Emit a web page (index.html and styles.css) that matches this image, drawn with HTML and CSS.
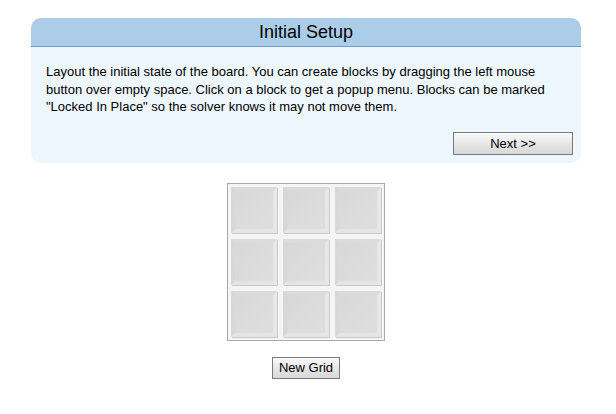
FILE: index.html
```html
<!DOCTYPE html>
<html>
<head>
<meta charset="utf-8">
<link rel="stylesheet" href="styles.css">
</head>
<body>
<div class="wrap">
  <div class="panel">
    <div class="panel-head">Initial Setup</div>
    <div class="panel-body">
      <p class="intro">Layout the initial state of the board. You can create blocks by dragging the left mouse button over empty space. Click on a block to get a popup menu. Blocks can be marked "Locked In Place" so the solver knows it may not move them.</p>
      <div class="actions"><button class="btn btn-next">Next &gt;&gt;</button></div>
    </div>
  </div>
  <div class="board-area">
    <div class="board">
      <div class="cell"></div><div class="cell"></div><div class="cell"></div>
      <div class="cell"></div><div class="cell"></div><div class="cell"></div>
      <div class="cell"></div><div class="cell"></div><div class="cell"></div>
    </div>
    <button class="btn btn-grid">New Grid</button>
  </div>
</div>
</body>
</html>
```
FILE: styles.css
```css
html, body {
  margin: 0;
  padding: 0;
  background: #fff;
}
body {
  font-family: "Liberation Sans", Arial, sans-serif;
  color: #000;
}
.wrap {
  width: 550px;
  margin: 18px 0 0 31px;
}
.panel {
  background: #eff7fe;
  border-radius: 10px;
  overflow: hidden;
}
.panel-head {
  background: #abcde7;
  border-bottom: 1px solid #6d9ec8;
  height: 28px;
  line-height: 29px;
  text-align: center;
  font-size: 18px;
}
.panel-body {
  padding: 16px 8px 8px 15px;
}
.intro {
  margin: 0 7px 0 0;
  font-size: 13px;
  line-height: 17.5px;
}
.actions {
  display: flex;
  justify-content: flex-end;
  margin-top: 16px;
}
.btn {
  font-family: "Liberation Sans", Arial, sans-serif;
  font-size: 13px;
  color: #000;
  background: linear-gradient(#fbfbfb, #e4e4e4 55%, #d8d8d8);
  border: 1px solid #7a7a7a;
  border-radius: 0;
  padding: 0;
  margin: 0;
}
.btn-next {
  width: 120px;
  height: 23px;
}
.board-area {
  display: flex;
  flex-direction: column;
  align-items: center;
  margin-top: 20px;
}
.board {
  display: grid;
  grid-template-columns: repeat(3, 46px);
  grid-auto-rows: 46px;
  gap: 6px;
  padding: 3px;
  border: 1px solid #a9a9a9;
  background: #f5f5f5;
}
.cell {
  box-sizing: border-box;
  background: linear-gradient(135deg, #d8d8d8, #dedede);
  border-style: solid;
  border-width: 4px;
  border-color: #dbdbdb #e7e7e7 #e5e5e5 #d7d7d7;
  box-shadow: 1px 1px 0 #c9c9c9;
}
.btn-grid {
  margin-top: 16px;
  height: 22px;
  padding: 0 6px;
}
```
